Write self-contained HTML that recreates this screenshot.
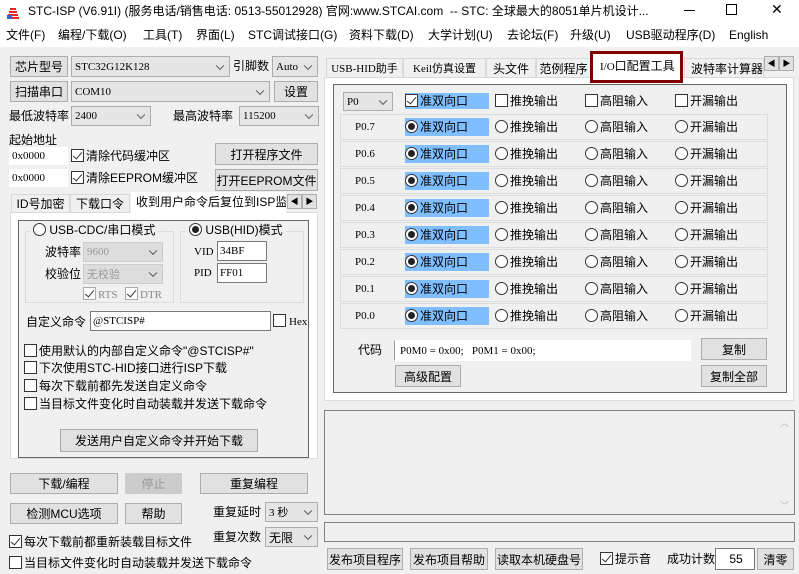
<!DOCTYPE html><html><head><meta charset="utf-8"><style>
*{margin:0;padding:0;box-sizing:border-box}
body{width:799px;height:574px;background:#f0f0f0;position:relative;overflow:hidden;font-family:"Liberation Sans","Noto Sans CJK SC",sans-serif;font-size:12px;color:#000}
div,span{position:absolute}
.t{white-space:nowrap;line-height:14px}
.b{background:#e1e1e1;border:1px solid #adadad;text-align:center;white-space:nowrap;display:flex;align-items:center;justify-content:center}
.c{background:#e5e5e5;border:1px solid #adadad;white-space:nowrap;padding-left:3px;display:flex;align-items:center;font-family:"Liberation Serif","Noto Sans CJK SC",serif;font-size:11px}
.c:after{content:"";position:absolute;right:6px;top:50%;width:5px;height:5px;border-right:1px solid #555;border-bottom:1px solid #555;transform:translateY(-70%) rotate(45deg)}
.in{background:#fff;border:1px solid #7a7a7a;white-space:nowrap;padding-left:2px;display:flex;align-items:center;font-family:"Liberation Serif",serif;font-size:11px}
.k{width:13px;height:13px;border:1px solid #333;background:#fff}
.k.on:after{content:"";position:absolute;left:3px;top:0px;width:4px;height:8px;border-right:1.5px solid #333;border-bottom:1.5px solid #333;transform:rotate(40deg)}
.r{width:13px;height:13px;border:1px solid #333;border-radius:50%;background:#fff}
.r.on:after{content:"";position:absolute;left:2px;top:2px;width:7px;height:7px;border-radius:50%;background:#222}
.hl{background:#80bfff}
.row{border:1px solid #dcdcdc;left:340px;width:428px;height:26px}
.g{border:1px solid #dcdcdc}
.mono{font-family:"Liberation Serif",serif;font-size:11px}
.m{font-size:12px}
</style></head><body>
<div style="left:0;top:0;width:799px;height:47px;background:#fff"></div>
<div style="left:6px;top:6px;width:14px;height:13px">
<svg width="14" height="13"><path d="M1 12h12M2 9h10M3 6h8M4 3h6" stroke="#e22" stroke-width="2"/><rect x="1" y="9" width="5" height="4" fill="#36c"/></svg></div>
<div class="t" style="left:28px;top:4px;font-size:12px">STC-ISP (V6.91I) (服务电话/销售电话: 0513-55012928) 官网:www.STCAI.com&nbsp; -- STC: 全球最大的8051单片机设计...</div>
<div style="left:684px;top:10px;width:11px;height:1px;background:#000"></div>
<div style="left:726px;top:4px;width:11px;height:11px;border:1px solid #000"></div>
<div class="t" style="left:771px;top:2px;font-size:14px">✕</div>
<div class="t m" style="left:6px;top:28px">文件(F)</div>
<div class="t m" style="left:58px;top:28px">编程/下载(O)</div>
<div class="t m" style="left:143px;top:28px">工具(T)</div>
<div class="t m" style="left:196px;top:28px">界面(L)</div>
<div class="t m" style="left:248px;top:28px">STC调试接口(G)</div>
<div class="t m" style="left:349px;top:28px">资料下载(D)</div>
<div class="t m" style="left:428px;top:28px">大学计划(U)</div>
<div class="t m" style="left:507px;top:28px">去论坛(F)</div>
<div class="t m" style="left:570px;top:28px">升级(U)</div>
<div class="t m" style="left:626px;top:28px">USB驱动程序(D)</div>
<div class="t m" style="left:729px;top:28px">English</div>

<div class="b" style="left:10px;top:56px;width:58px;height:21px">芯片型号</div>
<div class="c" style="left:71px;top:56px;width:159px;height:21px">STC32G12K128</div>
<div class="t" style="left:233px;top:59px">引脚数</div>
<div class="c" style="left:272px;top:56px;width:46px;height:21px">Auto</div>
<div class="b" style="left:10px;top:81px;width:58px;height:21px">扫描串口</div>
<div class="c" style="left:71px;top:81px;width:199px;height:21px">COM10</div>
<div class="b" style="left:274px;top:81px;width:44px;height:21px">设置</div>
<div class="t" style="left:9px;top:109px">最低波特率</div>
<div class="c" style="left:71px;top:106px;width:80px;height:20px">2400</div>
<div class="t" style="left:173px;top:109px">最高波特率</div>
<div class="c" style="left:239px;top:106px;width:80px;height:20px">115200</div>
<div class="t" style="left:9px;top:133px">起始地址</div>
<div class="in" style="left:9px;top:147px;width:59px;height:18px;border-color:#fff">0x0000</div>
<div class="k on" style="left:71px;top:149px"></div>
<div class="t" style="left:86px;top:149px">清除代码缓冲区</div>
<div class="b" style="left:215px;top:143px;width:103px;height:22px">打开程序文件</div>
<div class="in" style="left:9px;top:169px;width:59px;height:18px;border-color:#fff">0x0000</div>
<div class="k on" style="left:71px;top:171px"></div>
<div class="t" style="left:86px;top:171px">清除EEPROM缓冲区</div>
<div class="b" style="left:215px;top:169px;width:103px;height:22px">打开EEPROM文件</div>
<div style="left:10px;top:212px;width:308px;height:247px;background:#fff;border:1px solid #dcdcdc"></div>
<div class="b" style="left:11px;top:194px;width:59px;height:19px;background:#f0f0f0;border-color:#d9d9d9">ID号加密</div>
<div class="b" style="left:70px;top:194px;width:60px;height:19px;background:#f0f0f0;border-color:#d9d9d9">下载口令</div>
<div class="t" style="left:131px;top:192px;width:155px;height:21px;background:#fff;padding:3px 0 0 5px;overflow:hidden">收到用户命令后复位到ISP监控程序</div>
<div class="b" style="left:287px;top:194px;width:15px;height:15px;font-size:8px">◀</div>
<div class="b" style="left:302px;top:194px;width:15px;height:15px;font-size:8px">▶</div>
<div style="left:18px;top:220px;width:291px;height:238px;background:#f0f0f0;border:1px solid #666"></div>
<div class="g" style="left:25px;top:231px;width:149px;height:72px"></div>
<div class="t" style="left:30px;top:223px;background:#f0f0f0;padding:0 3px"><span class="r" style="position:relative;display:inline-block;vertical-align:-2px"></span> USB-CDC/串口模式</div>
<div class="t" style="left:45px;top:245px">波特率</div>
<div class="c" style="left:83px;top:242px;width:80px;height:20px;color:#999;background:#ddd;border-color:#ccc">9600</div>
<div class="t" style="left:45px;top:267px">校验位</div>
<div class="c" style="left:83px;top:264px;width:80px;height:20px;color:#999;background:#ddd;border-color:#ccc">无校验</div>
<div class="k on" style="left:83px;top:287px;border-color:#aaa"></div><div class="t mono" style="left:98px;top:288px;color:#888">RTS</div>
<div class="k on" style="left:125px;top:287px;border-color:#aaa"></div><div class="t mono" style="left:140px;top:288px;color:#888">DTR</div>
<div class="g" style="left:180px;top:231px;width:124px;height:72px"></div>
<div class="t" style="left:186px;top:223px;background:#f0f0f0;padding:0 3px"><span class="r on" style="position:relative;display:inline-block;vertical-align:-2px"></span> USB(HID)模式</div>
<div class="t mono" style="left:194px;top:245px">VID</div>
<div class="in" style="left:217px;top:241px;width:50px;height:20px">34BF</div>
<div class="t mono" style="left:194px;top:266px">PID</div>
<div class="in" style="left:217px;top:263px;width:50px;height:20px">FF01</div>
<div class="t" style="left:26px;top:315px">自定义命令</div>
<div class="in" style="left:90px;top:311px;width:181px;height:20px">@STCISP#</div>
<div class="k" style="left:273px;top:314px"></div><div class="t mono" style="left:289px;top:315px">Hex</div>
<div class="k" style="left:24px;top:344px"></div><div class="t" style="left:39px;top:344px">使用默认的内部自定义命令"@STCISP#"</div>
<div class="k" style="left:24px;top:361px"></div><div class="t" style="left:39px;top:361px">下次使用STC-HID接口进行ISP下载</div>
<div class="k" style="left:24px;top:379px"></div><div class="t" style="left:39px;top:379px">每次下载前都先发送自定义命令</div>
<div class="k" style="left:24px;top:397px"></div><div class="t" style="left:39px;top:397px">当目标文件变化时自动装载并发送下载命令</div>
<div class="b" style="left:60px;top:429px;width:198px;height:23px">发送用户自定义命令并开始下载</div>
<div class="b" style="left:10px;top:473px;width:108px;height:21px">下载/编程</div>
<div class="b" style="left:125px;top:473px;width:57px;height:21px;color:#999;background:#ccc;border-color:#ccc">停止</div>
<div class="b" style="left:200px;top:473px;width:108px;height:21px">重复编程</div>
<div class="b" style="left:10px;top:503px;width:108px;height:21px">检测MCU选项</div>
<div class="b" style="left:125px;top:503px;width:57px;height:21px">帮助</div>
<div class="t" style="left:213px;top:505px">重复延时</div>
<div class="c" style="left:265px;top:502px;width:53px;height:20px">3 秒</div>
<div class="t" style="left:213px;top:530px">重复次数</div>
<div class="c" style="left:265px;top:527px;width:53px;height:20px;font-family:'Liberation Sans','Noto Sans CJK SC',sans-serif;font-size:12px">无限</div>
<div class="k on" style="left:9px;top:535px"></div><div class="t" style="left:24px;top:535px">每次下载前都重新装载目标文件</div>
<div class="k" style="left:9px;top:556px"></div><div class="t" style="left:24px;top:556px">当目标文件变化时自动装载并发送下载命令</div>

<div style="left:324px;top:77px;width:470px;height:324px;background:#fff;border:1px solid #dcdcdc"></div>
<div class="b mono" style="left:326px;top:58px;width:77px;height:20px;background:#f0f0f0;border-color:#d9d9d9">USB-HID助手</div>
<div class="b mono" style="left:403px;top:58px;width:83px;height:20px;background:#f0f0f0;border-color:#d9d9d9">Keil仿真设置</div>
<div class="b" style="left:486px;top:58px;width:50px;height:20px;background:#f0f0f0;border-color:#d9d9d9">头文件</div>
<div class="b" style="left:536px;top:58px;width:55px;height:20px;background:#f0f0f0;border-color:#d9d9d9">范例程序</div>
<div class="b" style="left:684px;top:58px;width:80px;height:20px;background:#f0f0f0;border-color:#d9d9d9;justify-content:flex-start;padding-left:6px;overflow:hidden">波特率计算器</div>
<div class="b" style="left:764px;top:56px;width:15px;height:15px;font-size:8px">◀</div>
<div class="b" style="left:779px;top:56px;width:15px;height:15px;font-size:8px">▶</div>
<div style="left:590px;top:51px;width:93px;height:32px;background:#fff;border:3px solid #7f0000"></div>
<div class="t" style="left:600px;top:59px"><span class="mono" style="position:static">I/O</span>口配置工具</div>
<div style="left:333px;top:84px;width:454px;height:309px;background:#f0f0f0;border:1px solid #666"></div>
<div class="c" style="left:343px;top:92px;width:50px;height:19px">P0</div>
<div class="hl" style="left:405px;top:93px;width:84px;height:16px"></div>
<div class="k on" style="left:405px;top:94px"></div><div class="t" style="left:420px;top:94px">准双向口</div>
<div class="k" style="left:495px;top:94px"></div><div class="t" style="left:510px;top:94px">推挽输出</div>
<div class="k" style="left:585px;top:94px"></div><div class="t" style="left:600px;top:94px">高阻输入</div>
<div class="k" style="left:675px;top:94px"></div><div class="t" style="left:690px;top:94px">开漏输出</div>

<div class="row" style="top:114px"></div><div class="t mono" style="left:355px;top:120px">P0.7</div><div class="hl" style="left:405px;top:118px;width:84px;height:18px"></div><div class="r on" style="left:405px;top:120px"></div><div class="t" style="left:420px;top:120px">准双向口</div><div class="r" style="left:495px;top:120px"></div><div class="t" style="left:510px;top:120px">推挽输出</div><div class="r" style="left:585px;top:120px"></div><div class="t" style="left:600px;top:120px">高阻输入</div><div class="r" style="left:675px;top:120px"></div><div class="t" style="left:690px;top:120px">开漏输出</div>
<div class="row" style="top:141px"></div><div class="t mono" style="left:355px;top:147px">P0.6</div><div class="hl" style="left:405px;top:145px;width:84px;height:18px"></div><div class="r on" style="left:405px;top:147px"></div><div class="t" style="left:420px;top:147px">准双向口</div><div class="r" style="left:495px;top:147px"></div><div class="t" style="left:510px;top:147px">推挽输出</div><div class="r" style="left:585px;top:147px"></div><div class="t" style="left:600px;top:147px">高阻输入</div><div class="r" style="left:675px;top:147px"></div><div class="t" style="left:690px;top:147px">开漏输出</div>
<div class="row" style="top:168px"></div><div class="t mono" style="left:355px;top:174px">P0.5</div><div class="hl" style="left:405px;top:172px;width:84px;height:18px"></div><div class="r on" style="left:405px;top:174px"></div><div class="t" style="left:420px;top:174px">准双向口</div><div class="r" style="left:495px;top:174px"></div><div class="t" style="left:510px;top:174px">推挽输出</div><div class="r" style="left:585px;top:174px"></div><div class="t" style="left:600px;top:174px">高阻输入</div><div class="r" style="left:675px;top:174px"></div><div class="t" style="left:690px;top:174px">开漏输出</div>
<div class="row" style="top:195px"></div><div class="t mono" style="left:355px;top:201px">P0.4</div><div class="hl" style="left:405px;top:199px;width:84px;height:18px"></div><div class="r on" style="left:405px;top:201px"></div><div class="t" style="left:420px;top:201px">准双向口</div><div class="r" style="left:495px;top:201px"></div><div class="t" style="left:510px;top:201px">推挽输出</div><div class="r" style="left:585px;top:201px"></div><div class="t" style="left:600px;top:201px">高阻输入</div><div class="r" style="left:675px;top:201px"></div><div class="t" style="left:690px;top:201px">开漏输出</div>
<div class="row" style="top:222px"></div><div class="t mono" style="left:355px;top:228px">P0.3</div><div class="hl" style="left:405px;top:226px;width:84px;height:18px"></div><div class="r on" style="left:405px;top:228px"></div><div class="t" style="left:420px;top:228px">准双向口</div><div class="r" style="left:495px;top:228px"></div><div class="t" style="left:510px;top:228px">推挽输出</div><div class="r" style="left:585px;top:228px"></div><div class="t" style="left:600px;top:228px">高阻输入</div><div class="r" style="left:675px;top:228px"></div><div class="t" style="left:690px;top:228px">开漏输出</div>
<div class="row" style="top:249px"></div><div class="t mono" style="left:355px;top:255px">P0.2</div><div class="hl" style="left:405px;top:253px;width:84px;height:18px"></div><div class="r on" style="left:405px;top:255px"></div><div class="t" style="left:420px;top:255px">准双向口</div><div class="r" style="left:495px;top:255px"></div><div class="t" style="left:510px;top:255px">推挽输出</div><div class="r" style="left:585px;top:255px"></div><div class="t" style="left:600px;top:255px">高阻输入</div><div class="r" style="left:675px;top:255px"></div><div class="t" style="left:690px;top:255px">开漏输出</div>
<div class="row" style="top:276px"></div><div class="t mono" style="left:355px;top:282px">P0.1</div><div class="hl" style="left:405px;top:280px;width:84px;height:18px"></div><div class="r on" style="left:405px;top:282px"></div><div class="t" style="left:420px;top:282px">准双向口</div><div class="r" style="left:495px;top:282px"></div><div class="t" style="left:510px;top:282px">推挽输出</div><div class="r" style="left:585px;top:282px"></div><div class="t" style="left:600px;top:282px">高阻输入</div><div class="r" style="left:675px;top:282px"></div><div class="t" style="left:690px;top:282px">开漏输出</div>
<div class="row" style="top:303px"></div><div class="t mono" style="left:355px;top:309px">P0.0</div><div class="hl" style="left:405px;top:307px;width:84px;height:18px"></div><div class="r on" style="left:405px;top:309px"></div><div class="t" style="left:420px;top:309px">准双向口</div><div class="r" style="left:495px;top:309px"></div><div class="t" style="left:510px;top:309px">推挽输出</div><div class="r" style="left:585px;top:309px"></div><div class="t" style="left:600px;top:309px">高阻输入</div><div class="r" style="left:675px;top:309px"></div><div class="t" style="left:690px;top:309px">开漏输出</div>

<div class="t" style="left:358px;top:343px">代码</div>
<div class="in" style="left:394px;top:340px;width:297px;height:21px;border-color:#fff;border-left-color:#999;padding-left:5px">P0M0 = 0x00;&nbsp;&nbsp; P0M1 = 0x00;</div>
<div class="b" style="left:701px;top:338px;width:66px;height:22px">复制</div>
<div class="b" style="left:395px;top:365px;width:66px;height:22px">高级配置</div>
<div class="b" style="left:701px;top:365px;width:66px;height:22px">复制全部</div>

<div style="left:324px;top:410px;width:471px;height:105px;border:1px solid #828282;background:#f0f0f0"></div>
<div class="t" style="left:780px;top:416px;color:#bbb;font-size:9px">︿</div>
<div class="t" style="left:780px;top:499px;color:#bbb;font-size:9px">﹀</div>
<div style="left:324px;top:522px;width:471px;height:20px;border:1px solid #828282"></div>
<div class="b" style="left:327px;top:548px;width:76px;height:22px">发布项目程序</div>
<div class="b" style="left:410px;top:548px;width:78px;height:22px">发布项目帮助</div>
<div class="b" style="left:495px;top:548px;width:88px;height:22px">读取本机硬盘号</div>
<div class="k on" style="left:600px;top:552px"></div><div class="t" style="left:615px;top:552px">提示音</div>
<div class="t" style="left:667px;top:552px">成功计数</div>
<div class="in" style="left:715px;top:548px;width:40px;height:22px;justify-content:center;font-family:'Liberation Sans',sans-serif;font-size:12px">55</div>
<div class="b" style="left:757px;top:548px;width:37px;height:22px">清零</div>
</body></html>
